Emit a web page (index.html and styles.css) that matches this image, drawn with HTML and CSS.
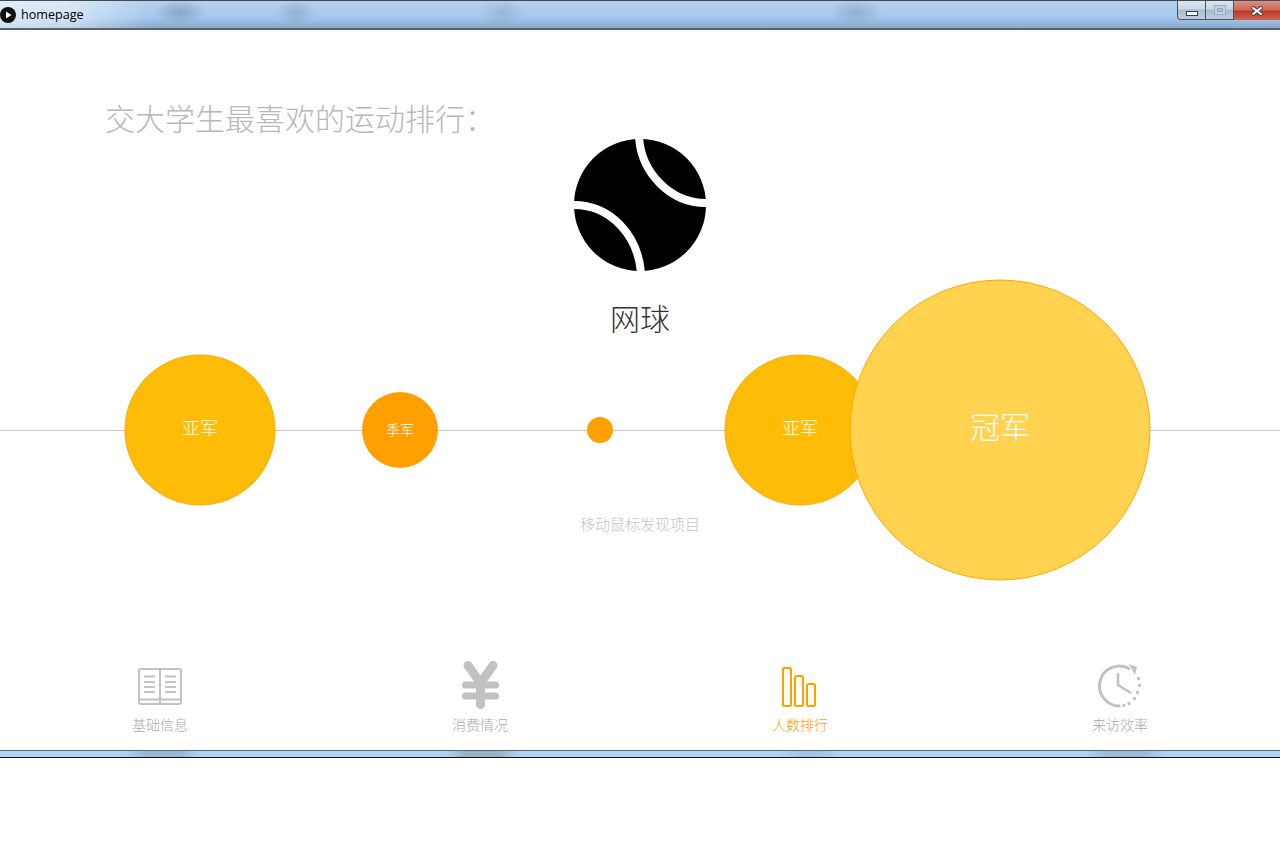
FILE: index.html
```html
<!DOCTYPE html>
<html lang="zh-CN">

<head>
    <meta charset="UTF-8">
    <title>homepage</title>
    <link rel="stylesheet" href="styles.css">
</head>

<body>
    <header class="titlebar">
        <svg class="app-icon" width="16" height="16" viewBox="0 0 16 16">
            <circle cx="8" cy="8" r="8" fill="#111" />
            <path d="M6 4.5 L11.5 8 L6 11.5 Z" fill="#fff" />
        </svg>
        <span class="app-name">homepage</span>
        <div class="win-buttons">
            <div class="win-btn">
                <span class="glyph-min"></span>
            </div>
            <div class="win-btn">
                <span class="glyph-max"></span>
            </div>
            <div class="win-btn win-close">
                <svg width="14" height="10" viewBox="0 0 14 10">
                    <path d="M2 1 L12 9 M12 1 L2 9" stroke="#444" stroke-width="4" />
                    <path d="M2.5 1.5 L11.5 8.5 M11.5 1.5 L2.5 8.5" stroke="#fff" stroke-width="2" />
                </svg>
            </div>
        </div>
    </header>

    <main class="stage">
        <h1 class="heading">交大学生最喜欢的运动排行：</h1>

        <svg class="ball" width="132" height="132" viewBox="0 0 132 132">
            <circle cx="66" cy="66" r="66" fill="#000" />
            <path d="M65 -2 C67 32 95 65 134 64" fill="none" stroke="#fff" stroke-width="8" />
            <path d="M-2 66 C36 65 64 96 67 134" fill="none" stroke="#fff" stroke-width="8" />
        </svg>

        <section class="chart">
            <div class="axis"></div>
            <div class="bubble silver bubble-left">亚军</div>
            <div class="bubble bronze">季军</div>
            <div class="bubble dot"></div>
            <div class="bubble silver bubble-right">亚军</div>
            <div class="bubble gold">冠军</div>
            <p class="sport-name">网球</p>
            <p class="hint">移动鼠标发现项目</p>
        </section>

        <nav class="tabs">
            <a class="tab">
                <svg width="50" height="50" viewBox="0 0 50 50" fill="none" stroke="currentColor">
                    <rect x="4" y="8" width="42" height="35" rx="2" stroke-width="2" />
                    <path d="M25 8 V43 M4 38.5 H46" stroke-width="2" />
                    <path d="M9 15.5 H20 M9 21 H20 M9 26 H20 M9 31 H20 M30 15.5 H41 M30 21 H41 M30 26 H41 M30 31 H41"
                        stroke-width="2" />
                </svg>
                <span>基础信息</span>
            </a>
            <a class="tab">
                <svg width="50" height="50" viewBox="0 0 50 50" fill="none" stroke="currentColor"
                    stroke-linecap="round" stroke-linejoin="round">
                    <path d="M13 4.5 L25.5 22 L38 4.5 M25.5 22 V43.5" stroke-width="9" />
                    <path d="M10.5 24 H40.5 M10.5 35 H40.5" stroke-width="7" />
                </svg>
                <span>消费情况</span>
            </a>
            <a class="tab active">
                <svg width="50" height="50" viewBox="0 0 50 50" fill="none" stroke="currentColor" stroke-width="2">
                    <rect x="8" y="7" width="8" height="38" rx="1.5" />
                    <rect x="20" y="15" width="8" height="30" rx="1.5" />
                    <rect x="32" y="23" width="8" height="22" rx="1.5" />
                </svg>
                <span>人数排行</span>
            </a>
            <a class="tab">
                <svg width="50" height="50" viewBox="0 0 50 50" fill="none" stroke="currentColor">
                    <path d="M35 8 A20 20 0 1 0 25.5 45" stroke-width="3" />
                    <path d="M29 44.5 h0 M34 42.5 h0 M39.5 37.5 h0 M42.5 31.5 h0 M44.5 24.5 h0 M43.5 17.5 h0"
                        stroke-width="3.5" stroke-linecap="round" />
                    <path d="M34 3 L42 6 L40 14 Z" fill="currentColor" stroke="none" />
                    <path d="M23 12 V24 L36 32" stroke-width="2.5" />
                </svg>
                <span>来访效率</span>
            </a>
        </nav>
    </main>

    <div class="bottom-frame"></div>
</body>

</html>
```

FILE: styles.css
```css
body {
    margin: 0;
    background: #fff;
    font-family: "Noto Sans CJK SC", "Noto Sans", sans-serif;
    font-weight: 300;
    color: #333;
}

.titlebar {
    height: 27px;
    border-top: 1px solid #3f4a55;
    border-bottom: 2px solid #57636f;
    display: flex;
    align-items: center;
    background:
        linear-gradient(90deg, rgba(255, 255, 255, 0.6) 0, rgba(255, 255, 255, 0.5) 70px, rgba(255, 255, 255, 0) 150px),
        radial-gradient(ellipse 26px 13px at 180px 11px, rgba(90, 110, 140, 0.4), transparent),
        radial-gradient(ellipse 20px 13px at 296px 11px, rgba(90, 110, 140, 0.28), transparent),
        radial-gradient(ellipse 24px 13px at 502px 11px, rgba(90, 110, 140, 0.22), transparent),
        radial-gradient(ellipse 26px 13px at 856px 11px, rgba(90, 110, 140, 0.3), transparent),
        linear-gradient(180deg, #b4d0ee 0, #a6c8ec 60%, #8aa9cc 100%);
}

.app-icon {
    flex: none;
}

.app-name {
    margin-left: 5px;
    font-family: "Open Sans", sans-serif;
    font-weight: 400;
    font-size: 12.6px;
    color: #000;
}

.win-buttons {
    margin-left: auto;
    align-self: flex-start;
    height: 19px;
    display: flex;
}

.win-btn {
    width: 27px;
    display: flex;
    align-items: center;
    justify-content: center;
    border: 1px solid #4a5562;
    border-top: none;
    border-left-width: 0;
    background: linear-gradient(180deg, #dbe5f0 0, #c8d6e5 45%, #a9bbce 50%, #bfcede 100%);
}

.win-btn:first-child {
    border-left-width: 1px;
    border-bottom-left-radius: 4px;
}

.win-close {
    width: 46px;
    border: none;
    background: linear-gradient(180deg, #d99184 0, #cf6a58 45%, #bb3a24 55%, #d0654f 100%);
}

.glyph-min {
    width: 10px;
    height: 3px;
    margin-top: 6px;
    background: #fff;
    border: 1px solid #39424c;
}

.glyph-max {
    width: 10px;
    height: 8px;
    margin-bottom: 1px;
    border: 1px solid #9fb0c2;
    box-shadow: inset 0 0 0 2px #c3d0de, inset 0 0 0 3px #93a6ba;
}

.stage {
    height: 720px;
    display: flex;
    flex-direction: column;
}

.heading {
    margin: 0;
    padding: 67px 0 2px 105px;
    font-size: 30px;
    font-weight: 300;
    line-height: 40px;
    color: #b8b8b8;
}

.ball {
    display: block;
    align-self: center;
    overflow: hidden;
}

.chart {
    position: relative;
    height: 300px;
    margin-top: 9px;
    display: flex;
    flex-direction: column;
    align-items: center;
}

.axis {
    position: absolute;
    left: 0;
    right: 0;
    top: 150px;
    height: 1px;
    background: #c8c8c8;
}

.bubble {
    position: absolute;
    border-radius: 50%;
    display: flex;
    align-items: center;
    justify-content: center;
    box-sizing: border-box;
    color: #fff;
    transform: translate(-50%, -50%);
    top: 150px;
}

.silver {
    width: 151px;
    height: 151px;
    background: #ffbc07;
    border: 1px solid #ffa800;
    font-size: 18px;
    padding-bottom: 8px;
}

.bubble-left {
    left: 200px;
}

.bubble-right {
    left: 800px;
}

.bronze {
    left: 400px;
    width: 76px;
    height: 76px;
    background: #ff9f00;
    font-size: 14px;
    padding-bottom: 2px;
}

.dot {
    left: 600px;
    width: 26px;
    height: 26px;
    background: #ff9f00;
}

.gold {
    left: 1000px;
    width: 301px;
    height: 301px;
    background: #ffd34f;
    border: 1px solid #ffa800;
    font-size: 30px;
    padding-bottom: 12px;
}

.sport-name {
    margin: 17px 0 0;
    font-size: 30px;
    line-height: 40px;
    color: #333;
}

.hint {
    margin: 177px 0 0;
    font-size: 15px;
    line-height: 20px;
    color: #c4c4c4;
}

.tabs {
    margin-top: 81px;
    display: grid;
    grid-template-columns: repeat(4, 1fr);
}

.tab {
    display: flex;
    flex-direction: column;
    align-items: center;
    gap: 3px;
    color: #aaa;
    font-size: 14px;
    line-height: 20px;
}

.tab svg {
    display: block;
    color: #c2c2c2;
}

.tab.active,
.tab.active svg {
    color: #ffa000;
}

.bottom-frame {
    height: 6px;
    border-top: 1px solid #55677c;
    border-bottom: 1px solid #111;
    background:
        linear-gradient(90deg, transparent 125px, rgba(110, 130, 155, 0.35) 145px, rgba(110, 130, 155, 0.35) 180px, transparent 200px),
        linear-gradient(90deg, transparent 445px, rgba(120, 130, 130, 0.4) 465px, rgba(120, 130, 130, 0.4) 500px, transparent 520px),
        linear-gradient(90deg, transparent 780px, rgba(110, 130, 155, 0.2) 800px, rgba(110, 130, 155, 0.2) 820px, transparent 840px),
        linear-gradient(90deg, transparent 1085px, rgba(110, 130, 155, 0.3) 1105px, rgba(110, 130, 155, 0.3) 1145px, transparent 1165px),
        #b3d3f5;
}
```
